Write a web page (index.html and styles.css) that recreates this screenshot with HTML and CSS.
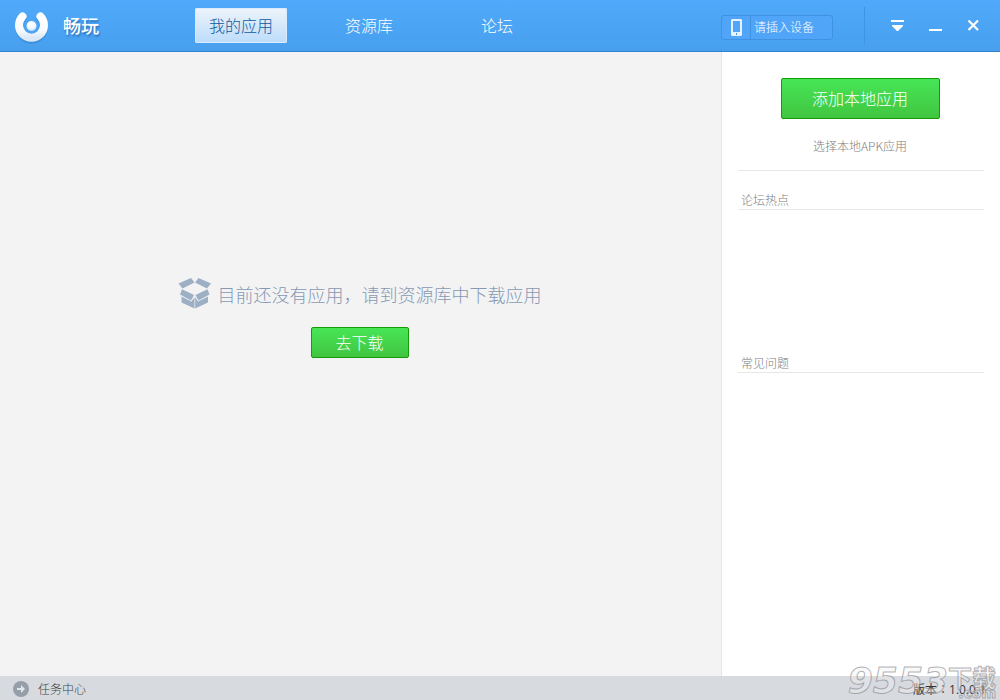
FILE: index.html
```html
<!DOCTYPE html>
<html lang="zh-CN">
<head>
<meta charset="utf-8">
<title>畅玩</title>
<link rel="stylesheet" href="styles.css">
</head>
<body>
<header class="topbar">
  <div class="brand">
    <svg class="logo" width="38" height="38" viewBox="0 0 38 38" aria-hidden="true">
      <defs>
        <linearGradient id="ring" x1="0" y1="0" x2="0" y2="1">
          <stop offset="0" stop-color="#ffffff"/><stop offset=".65" stop-color="#f7fbff"/><stop offset="1" stop-color="#dbe8f6"/>
        </linearGradient>
        <radialGradient id="ball" cx=".5" cy=".3" r=".7">
          <stop offset="0" stop-color="#ffffff"/><stop offset=".5" stop-color="#f4faff"/><stop offset="1" stop-color="#cfe4f8"/>
        </radialGradient>
      </defs>
      <g fill="none" stroke-width="8" stroke-linecap="round">
        <path d="M10.500 9.500A12.500 12.500 0 1 0 28.500 9.500" transform="translate(0 2)" stroke="#2f7fc9" stroke-opacity=".5"/>
        <path d="M10.500 9.500A12.500 12.500 0 1 0 28.500 9.500" stroke="url(#ring)"/>
      </g>
      <circle cx="19.500" cy="19" r="5" fill="url(#ball)"/>
    </svg>
    <span class="brand-name">畅玩</span>
  </div>
  <nav class="nav">
    <a class="nav-item active" href="#apps">我的应用</a>
    <a class="nav-item" href="#library">资源库</a>
    <a class="nav-item" href="#forum">论坛</a>
  </nav>
  <button class="device" type="button">
    <span class="device-icon">
      <svg width="11" height="17" viewBox="0 0 11 17" aria-hidden="true"><path fill="#e6f3ff" fill-rule="evenodd" d="M1 0H10L11 1V16L10 17H1L0 16V1ZM2 2V13H9V2Z"/><path fill="#4595df" d="M5 14H6V16H5Z"/></svg>
    </span>
    <span class="device-text">请插入设备</span>
  </button>
  <div class="window-controls">
    <button class="win" type="button" aria-label="菜单"><svg width="14" height="14" viewBox="0 0 14 14"><path fill="#fff" d="M0 1H13V3H0ZM1 6H12V7L7 12H6L1 7Z"/></svg></button>
    <button class="win" type="button" aria-label="最小化"><svg width="14" height="14" viewBox="0 0 14 14"><path fill="#fff" d="M0 10H13V12H0Z"/></svg></button>
    <button class="win" type="button" aria-label="关闭"><svg width="14" height="14" viewBox="0 0 14 14"><path fill="none" stroke="#fff" stroke-width="2.200" d="M1.500 1.500L11 11M11 1.500L1.500 11"/></svg></button>
  </div>
</header>
<div class="body">
  <main class="content">
    <div class="empty">
      <svg width="34" height="32" viewBox="0 0 34 32" aria-hidden="true">
        <g fill="#9dafc5">
          <path d="M13 1L16.500 5.500L4.500 11.500L0.500 6.500Z"/>
          <path d="M20.500 1L33 6.500L29 11.500L17 5.500Z"/>
          <path d="M4 12.300L16 18L13 23.500L2 17.500Z"/>
          <path d="M29.500 12.300L17.500 18L20.500 23.500L31.500 17.500Z"/>
          <path d="M3.500 19.500L13.500 24.500L16.500 20V31.500L3.500 25.500Z"/>
          <path d="M30 19.500L20 24.500L17.200 20V31.500L30 25.500Z"/>
        </g>
      </svg>
      <p class="empty-text">目前还没有应用，请到资源库中下载应用</p>
    </div>
    <button class="green small" type="button">去下载</button>
  </main>
  <aside class="side">
    <section class="add">
      <button class="green large" type="button">添加本地应用</button>
      <p class="hint">选择本地APK应用</p>
    </section>
    <section class="topic">
      <h2 class="topic-title">论坛热点</h2>
    </section>
    <section class="topic">
      <h2 class="topic-title">常见问题</h2>
    </section>
  </aside>
</div>
<footer class="status">
  <a class="tasks" href="#tasks">
    <svg width="16" height="16" viewBox="0 0 16 16" aria-hidden="true"><circle cx="8" cy="8" r="8" fill="#969eaa"/><path fill="#e2e6eb" d="M4 7H8V4L12 8L8 12V9H4Z"/></svg>
    <span>任务中心</span>
  </a>
  <span class="version">版本<span class="mid" lang="zh-TW">：</span>1.0.0.1</span>
</footer>
<div class="mark" aria-hidden="true">
  <span class="mark-num">9553</span>
  <span class="mark-cn">下载</span>
  <span class="mark-com">.com</span>
</div>
</body>
</html>
```
FILE: styles.css
```css
* { box-sizing: border-box; }
body {
  margin: 0;
  min-height: 100vh;
  display: flex;
  flex-direction: column;
  position: relative;
  font-family: "Noto Sans CJK SC", sans-serif;
  font-weight: 300;
  font-size: 12px;
  line-height: 18px;
  color: #808080;
  background: #f3f3f3;
}
button { font: inherit; margin: 0; padding: 0; cursor: pointer; }
a { color: inherit; text-decoration: none; }
p, h2 { margin: 0; font-size: inherit; font-weight: inherit; }
svg { display: block; flex: none; }
.mid { font-family: "Noto Sans CJK TC", sans-serif; }

.topbar {
  display: flex;
  align-items: center;
  height: 52px;
  color: #fff;
  background: linear-gradient(#51a9fb, #479fee);
  border-bottom: 1px solid #2e82ce;
}
.brand {
  display: flex;
  align-items: center;
  gap: 13px;
  width: 195px;
  padding-left: 12px;
}
.brand-name {
  padding-bottom: 2px;
  font-size: 18px;
  line-height: 24px;
  font-weight: 500;
  text-shadow: 1px 2px 2px #2b75bd;
}
.nav { display: flex; gap: 36px; flex: 1; }
.nav-item {
  width: 92px;
  height: 35px;
  font-size: 16px;
  line-height: 35px;
  text-align: center;
  border-radius: 2px;
}
.nav-item.active {
  color: #0f5a9f;
  background: linear-gradient(#eef4fa, #bcdcfa);
  box-shadow: inset 0 0 0 1px #d9ebfc;
}
.device {
  display: flex;
  align-items: center;
  width: 112px;
  height: 25px;
  margin-top: 3px;
  color: #fff;
  background: #50a5f9;
  border: 1px solid #3f92e2;
  border-radius: 3px;
}
.device-icon {
  display: flex;
  align-items: center;
  justify-content: center;
  width: 29px;
  height: 23px;
  border-right: 1px solid #3f92e2;
}
.device-text { padding-left: 3px; }
.window-controls {
  display: flex;
  align-items: center;
  gap: 14px;
  height: 38px;
  margin-left: 31px;
  padding: 0 14px 0 21px;
  border-left: 1px solid #3f94e4;
}
.win {
  display: flex;
  align-items: center;
  justify-content: center;
  width: 24px;
  height: 24px;
  background: none;
  border: 0;
}

.body { display: flex; flex: 1; }
.content {
  flex: 1;
  display: flex;
  flex-direction: column;
  align-items: center;
  gap: 18px;
  padding: 225px 2px 0 0;
}
.empty { display: flex; align-items: center; gap: 6px; }
.empty-text {
  padding-top: 2px;
  font-size: 18px;
  line-height: 28px;
  color: #8699b4;
}
.green {
  color: #fff;
  font-size: 16px;
  line-height: 24px;
  padding-bottom: 1px;
  background: linear-gradient(#47e557, #41c540);
  border: 1px solid #159a08;
  border-radius: 2px;
}
.small { width: 98px; height: 31px; }
.large { width: 159px; height: 41px; }

.side {
  width: 279px;
  padding: 26px 16px 0;
  background: #fff;
  border-left: 1px solid #e6e6e6;
}
.add {
  display: flex;
  flex-direction: column;
  align-items: center;
  gap: 18px;
  padding: 0 2px 15px 0;
  border-bottom: 1px solid #e7e7e7;
}
.topic { height: 163px; padding-top: 20px; }
.topic-title {
  padding-left: 3px;
  border-bottom: 1px solid #e7e7e7;
}

.status {
  display: flex;
  align-items: center;
  justify-content: space-between;
  height: 24px;
  padding: 2px 14px 0 13px;
  color: #444;
  background: #d7dbe0;
}
.tasks { display: flex; align-items: center; gap: 9px; }
.version {
  font-family: "Open Sans", "Noto Sans CJK SC", sans-serif;
  color: #333;
  font-weight: 400;
}

.mark {
  position: absolute;
  right: 4px;
  bottom: 3px;
  display: grid;
  grid-template-columns: auto auto;
  color: rgba(240, 240, 242, .4);
  -webkit-text-stroke: 1px rgba(135, 135, 140, .65);
  pointer-events: none;
}
.mark-num {
  grid-row: 1 / 3;
  font: italic 700 36px/32px "DejaVu Sans", sans-serif;
}
.mark-cn { font-size: 24px; line-height: 24px; font-weight: 700; }
.mark-com {
  font: 700 14px/8px "DejaVu Sans", sans-serif;
  text-align: right;
}
```
